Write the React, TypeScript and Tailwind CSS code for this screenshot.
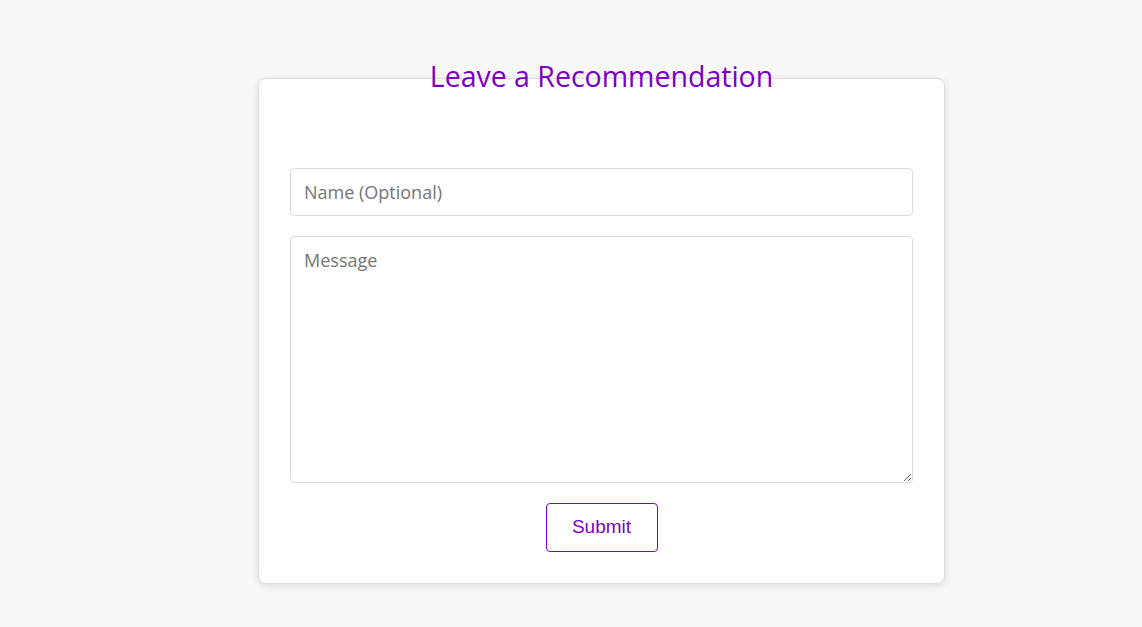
export default function App() {
  return (
    <div className="min-h-[627px] bg-[#f8f8f8] pl-[258px] pt-[78px]" style={{ fontFamily: "'Open Sans', sans-serif" }}>
      <div className="w-[687px] rounded-lg border border-[#dedede] bg-white px-[31px] pb-[31px] shadow-[0_2px_8px_rgba(0,0,0,0.12)]">
        <h2 className="-mt-[20px] mb-[75px] text-center text-[28.5px] leading-[34px] text-[#7a00c6]">
          Leave a Recommendation
        </h2>
        <form className="flex flex-col items-center gap-5" onSubmit={(e) => e.preventDefault()}>
          <input
            type="text"
            placeholder="Name (Optional)"
            className="h-[48px] w-full rounded border border-[#dcdcdc] px-[13px] text-[18px] outline-none placeholder:text-[#757575]"
          />
          <textarea
            placeholder="Message"
            className="h-[247px] w-full rounded border border-[#dcdcdc] px-[13px] py-[10px] text-[18px] outline-none placeholder:text-[#757575]"
          />
          <button
            type="submit"
            className="h-[49px] w-[112px] rounded border border-[#7a00c6] bg-white text-[19px] text-[#7a00c6]"
            style={{ fontFamily: "'Liberation Sans', Arial, sans-serif" }}
          >
            Submit
          </button>
        </form>
      </div>
    </div>
  );
}
